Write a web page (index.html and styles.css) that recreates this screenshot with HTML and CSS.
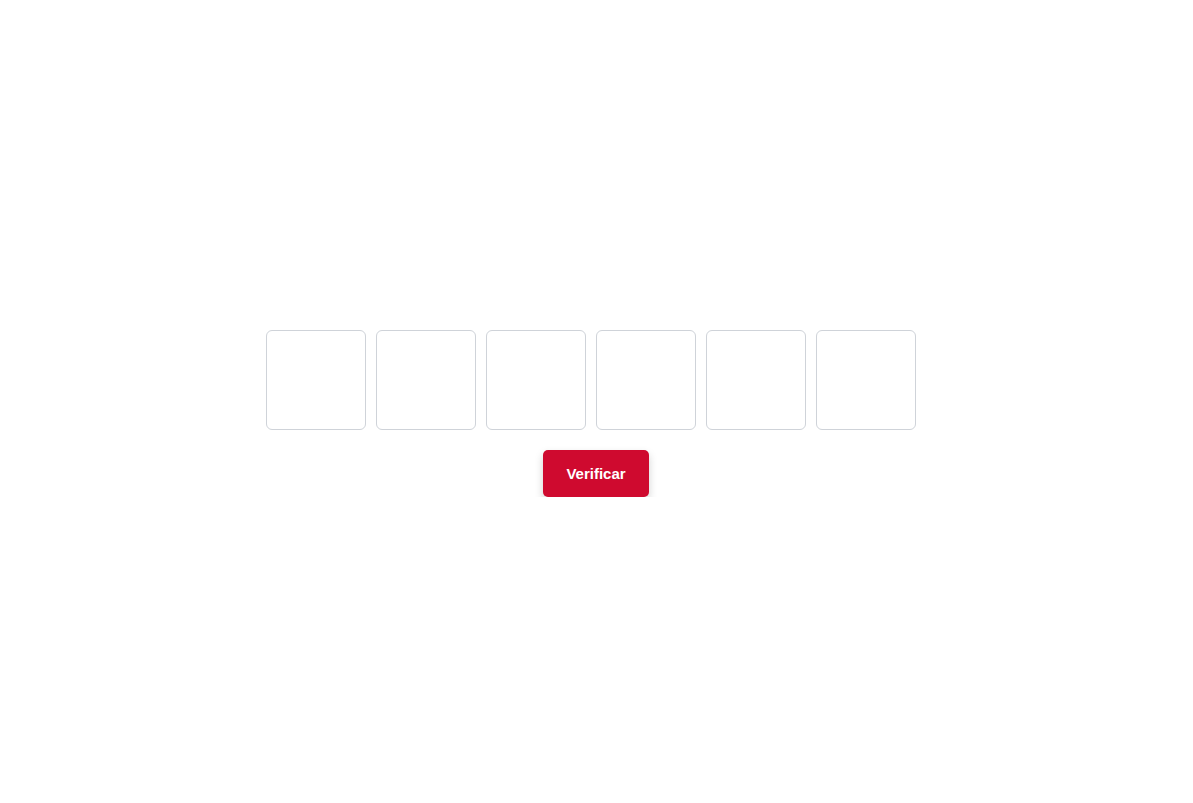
FILE: index.html
```html
<!DOCTYPE html>
<html lang="es">
<head>
<meta charset="utf-8">
<title>Verificar</title>
<link rel="stylesheet" href="styles.css">
</head>
<body>
<main class="page">
  <form class="verify">
    <div class="code-row">
      <input class="code-box" type="text" maxlength="1" aria-label="Dígito 1">
      <input class="code-box" type="text" maxlength="1" aria-label="Dígito 2">
      <input class="code-box" type="text" maxlength="1" aria-label="Dígito 3">
      <input class="code-box" type="text" maxlength="1" aria-label="Dígito 4">
      <input class="code-box" type="text" maxlength="1" aria-label="Dígito 5">
      <input class="code-box" type="text" maxlength="1" aria-label="Dígito 6">
    </div>
    <button class="verify-btn" type="button">Verificar</button>
  </form>
</main>
</body>
</html>
```
FILE: styles.css
```css
html, body {
  margin: 0;
  padding: 0;
  background: #ffffff;
  font-family: "Liberation Sans", Arial, sans-serif;
}

.page {
  padding-top: 330px;
}

.verify {
  display: flex;
  flex-direction: column;
  align-items: center;
  gap: 20px;
}

.code-row {
  display: flex;
  justify-content: center;
  padding-right: 1px;
}

.code-box {
  box-sizing: border-box;
  width: 100px;
  height: 100px;
  margin: 0 10px 0 0;
  padding: 0;
  border: 1px solid #cfd3d9;
  border-radius: 6px;
  background: #ffffff;
  text-align: center;
  font-size: 32px;
  font-family: "Liberation Sans", Arial, sans-serif;
  outline: none;
}

.verify-btn {
  box-sizing: border-box;
  min-width: 106px;
  height: 47px;
  margin-right: 1px;
  padding: 0 23px;
  border: none;
  border-radius: 5px;
  background: #cf0a2f;
  color: #ffffff;
  font-family: "Liberation Sans", Arial, sans-serif;
  font-size: 15px;
  font-weight: bold;
  box-shadow: 0 4px 8px rgba(0, 0, 0, 0.18);
  cursor: pointer;
}
```
